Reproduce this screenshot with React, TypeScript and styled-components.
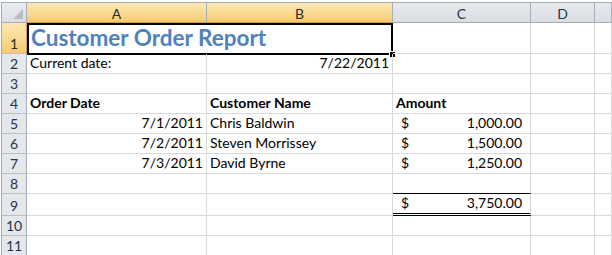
import React from 'react';
import styled, { createGlobalStyle, css } from 'styled-components';

const GlobalStyle = createGlobalStyle`
  html, body {
    margin: 0;
    padding: 0;
    background: #ffffff;
  }
  body {
    font-family: Lato, "Liberation Sans", sans-serif;
  }
`;

const FONT = `Lato, "Liberation Sans", sans-serif`;
const GRID = '#d9d9d9';
const HEAD_LINE = '#a5acb5';

const Frame = styled.div`
  padding-top: 2px;
  width: 612px;
  height: 255px;
  overflow: hidden;
  box-sizing: border-box;
`;

const Sheet = styled.div`
  display: grid;
  grid-template-columns: 25px 180px 186px 138px 64px 1fr;
  grid-template-rows: 20px 31px repeat(7, 20px) 22px 20px 20px;
  border-top: 1px solid ${HEAD_LINE};
  border-left: 1px solid ${HEAD_LINE};
  margin-left: 1px;
  font-family: ${FONT};
`;

const Corner = styled.div`
  position: relative;
  box-sizing: border-box;
  background: linear-gradient(#e9ecf0, #dcdfe4);
  border-right: 1px solid ${HEAD_LINE};
  border-bottom: 1px solid ${HEAD_LINE};

  &::after {
    content: '';
    position: absolute;
    right: 3px;
    bottom: 3px;
    width: 0;
    height: 0;
    border-left: 10px solid transparent;
    border-bottom: 10px solid #b9bdc3;
  }
`;

const activeHead = css`
  background: linear-gradient(#fbe6b4 0%, #f9d98f 60%, #f5c96a 100%);
  color: #2b2b2b;
`;

const ColHeader = styled.div<{ $active?: boolean }>`
  box-sizing: border-box;
  display: flex;
  align-items: center;
  justify-content: center;
  background: linear-gradient(#e6e9ed, #dadee3);
  border-right: 1px solid ${HEAD_LINE};
  border-bottom: 1px solid ${HEAD_LINE};
  color: #26364a;
  font-size: 14px;
  padding-top: 1px;
  ${(p) => p.$active && activeHead}
  ${(p) => p.$active && css`border-bottom-color: #c9a24a;`}
`;

const RowHeader = styled.div<{ $active?: boolean }>`
  box-sizing: border-box;
  display: flex;
  align-items: flex-end;
  justify-content: center;
  padding-bottom: 1px;
  background: #e4e7eb;
  border-right: 1px solid ${HEAD_LINE};
  border-bottom: 1px solid #b9bfc6;
  color: #26364a;
  font-size: 14px;
  ${(p) => p.$active && activeHead}
  ${(p) => p.$active && css`border-right-color: #c9a24a;`}
`;

type Rule = 'grid' | 'single' | 'double';

const Cell = styled.div<{ $align?: 'left' | 'right'; $bold?: boolean; $rule?: Rule; $span?: number }>`
  position: relative;
  box-sizing: border-box;
  display: flex;
  align-items: flex-end;
  justify-content: ${(p) => (p.$align === 'right' ? 'flex-end' : 'flex-start')};
  padding: 0 3px 1px 3px;
  border-right: 1px solid ${GRID};
  border-bottom: 1px solid ${GRID};
  font-size: 14px;
  line-height: 18px;
  color: #000;
  white-space: nowrap;
  font-weight: ${(p) => (p.$bold ? 700 : 400)};
  ${(p) => p.$span && css`grid-column: span ${p.$span};`}
  ${(p) => p.$rule === 'single' && css`border-bottom-color: #000;`}
  ${(p) => p.$rule === 'double' && css`border-bottom: 3px double #000;`}
`;

const Title = styled.span`
  font-size: 22.5px;
  font-weight: 700;
  color: #4f81bd;
  line-height: 28px;
  padding-left: 1px;
`;

const Selection = styled.div`
  position: absolute;
  left: 0;
  top: 0;
  right: -1px;
  bottom: -2px;
  border: 2px solid #000;
  pointer-events: none;

  &::after {
    content: '';
    position: absolute;
    right: -5px;
    bottom: -5px;
    width: 5px;
    height: 5px;
    background: #000;
    border: 1px solid #fff;
  }
`;

const Money = styled.div`
  display: flex;
  justify-content: space-between;
  width: 100%;
  padding: 0 5px 0 5px;
`;

const Amount = ({ value }: { value: string }) => (
  <Money>
    <span>$</span>
    <span>{value}</span>
  </Money>
);

const columns = ['A', 'B', 'C', 'D', ''];

const orders = [
  { date: '7/1/2011', name: 'Chris Baldwin', amount: '1,000.00' },
  { date: '7/2/2011', name: 'Steven Morrissey', amount: '1,500.00' },
  { date: '7/3/2011', name: 'David Byrne', amount: '1,250.00' },
];

const Empty = ({ n }: { n: number }) => (
  <>
    {Array.from({ length: n }).map((_, i) => (
      <Cell key={i} />
    ))}
  </>
);

function App() {
  return (
    <Frame>
      <GlobalStyle />
      <Sheet>
        <Corner />
        {columns.map((c, i) => (
          <ColHeader key={i} $active={c === 'A' || c === 'B'}>
            {c}
          </ColHeader>
        ))}

        <RowHeader $active>1</RowHeader>
        <Cell $span={2}>
          <Title>Customer Order Report</Title>
          <Selection />
        </Cell>
        <Empty n={3} />

        <RowHeader>2</RowHeader>
        <Cell>Current date:</Cell>
        <Cell $align="right">7/22/2011</Cell>
        <Empty n={3} />

        <RowHeader>3</RowHeader>
        <Empty n={5} />

        <RowHeader>4</RowHeader>
        <Cell $bold>Order Date</Cell>
        <Cell $bold>Customer Name</Cell>
        <Cell $bold>Amount</Cell>
        <Empty n={2} />

        {orders.map((o, i) => (
          <React.Fragment key={o.name}>
            <RowHeader>{i + 5}</RowHeader>
            <Cell $align="right">{o.date}</Cell>
            <Cell>{o.name}</Cell>
            <Cell>
              <Amount value={o.amount} />
            </Cell>
            <Empty n={2} />
          </React.Fragment>
        ))}

        <RowHeader>8</RowHeader>
        <Empty n={2} />
        <Cell $rule="single" />
        <Empty n={2} />

        <RowHeader>9</RowHeader>
        <Empty n={2} />
        <Cell $rule="double">
          <Amount value="3,750.00" />
        </Cell>
        <Empty n={2} />

        <RowHeader>10</RowHeader>
        <Empty n={5} />

        <RowHeader>11</RowHeader>
        <Empty n={5} />
      </Sheet>
    </Frame>
  );
}

export default App;
